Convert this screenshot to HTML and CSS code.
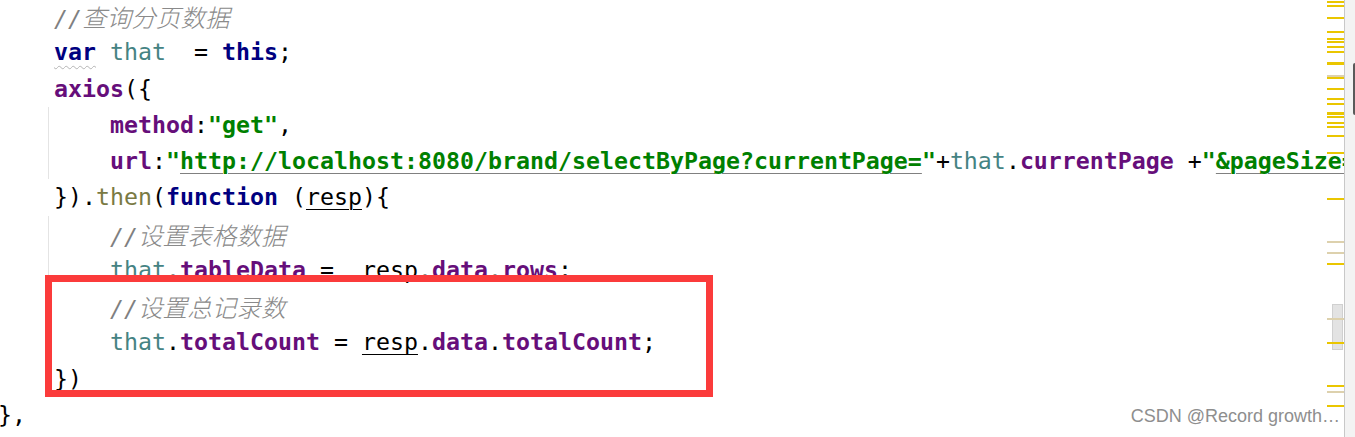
FILE: index.html
```html
<!DOCTYPE html>
<html lang="zh-CN">
<head>
    <meta charset="UTF-8">
    <title>axios 分页查询</title>
    <link rel="stylesheet" href="styles.css">
</head>
<body>
    <div class="window">
        <div class="editor">
            <div class="code">
                <div class="line">    <span class="cm">//<span class="zh">查询分页数据</span></span></div>
                <div class="line">    <span class="kw warn">var</span> <span class="var">that</span>  = <span class="kw">this</span>;</div>
                <div class="line">    <span class="fld">axios</span>({</div>
                <div class="line"><span class="guide"></span>        <span class="fld">method</span>:<span class="str">"get"</span>,</div>
                <div class="line"><span class="guide"></span>        <span class="fld">url</span>:<span class="str">"<span class="link">http://localhost:8080/brand/selectByPage?currentPage=</span>"</span>+<span class="var">that</span>.<span class="fld">currentPage</span> +<span class="str">"<span class="link">&amp;pageSize=</span>"</span>+<span class="var">that</span>.<span class="fld">pageSize</span>,</div>
                <div class="line">    }).<span class="fn">then</span>(<span class="kw">function</span> (<span class="param">resp</span>){</div>
                <div class="line"><span class="guide"></span>        <span class="cm">//<span class="zh">设置表格数据</span></span></div>
                <div class="line"><span class="guide"></span>        <span class="var">that</span>.<span class="fld">tableData</span> =  <span class="plain">resp</span>.<span class="fld">data</span>.<span class="fld">rows</span>;</div>
                <div class="line"><span class="guide"></span>        <span class="cm">//<span class="zh">设置总记录数</span></span></div>
                <div class="line"><span class="guide"></span>        <span class="var">that</span>.<span class="fld">totalCount</span> = <span class="param">resp</span>.<span class="fld">data</span>.<span class="fld">totalCount</span>;</div>
                <div class="line">    })</div>
                <div class="line">},</div>
            </div>

            <div class="highlight"></div>

            <div class="stripe">
                <div class="thumb"></div>
                <i class="mark" style="top:1px"></i>
                <i class="mark" style="top:5px"></i>
                <i class="mark" style="top:17px"></i>
                <i class="mark" style="top:31px"></i>
                <i class="mark" style="top:38px"></i>
                <i class="mark" style="top:41px"></i>
                <i class="mark" style="top:46px"></i>
                <i class="mark" style="top:51px"></i>
                <i class="mark wide" style="top:62px"></i>
                <i class="mark soft" style="top:75px"></i>
                <i class="mark" style="top:77px"></i>
                <i class="mark" style="top:88px"></i>
                <i class="mark" style="top:98px"></i>
                <i class="mark" style="top:103px"></i>
                <i class="mark wide" style="top:112px"></i>
                <i class="mark" style="top:116px"></i>
                <i class="mark" style="top:122px"></i>
                <i class="mark" style="top:126px"></i>
                <i class="mark" style="top:135px"></i>
                <i class="mark" style="top:152px"></i>
                <i class="mark" style="top:198px"></i>
                <i class="mark soft" style="top:241px"></i>
                <i class="mark soft" style="top:252px"></i>
                <i class="mark" style="top:263px"></i>
                <i class="mark soft" style="top:318px"></i>
                <i class="mark" style="top:342px"></i>
                <i class="mark" style="top:385px"></i>
                <i class="mark soft" style="top:391px"></i>
                <i class="mark" style="top:405px"></i>
            </div>
        </div>
        <div class="side">
            <div class="side-thumb"></div>
        </div>

        <div class="watermark">CSDN @Record growth…</div>
    </div>
</body>
</html>
```

FILE: styles.css
```css
body {
    margin: 0;
    background: #fff;
    overflow: hidden;
}
.window {
    position: relative;
    display: flex;
    height: 437px;
    overflow: hidden;
}
.editor {
    position: relative;
    flex: 1;
    overflow: hidden;
}
.code {
    margin: -2px 0 0 -2px;
    font-family: "DejaVu Sans Mono", monospace;
    font-size: 23.26px;
    color: #000;
}
.line {
    position: relative;
    height: 36.27px;
    line-height: 36.27px;
    white-space: pre;
}
.guide {
    position: absolute;
    left: 50px;
    top: 0;
    bottom: 0;
    border-left: 1px solid #e4e4e4;
}

.kw { color: #000080; font-weight: bold; }
.var { color: #458383; }
.fld { color: #660e7a; font-weight: bold; }
.str { color: #008000; font-weight: bold; }
.fn { color: #7a7a43; }
.cm { color: #808080; font-style: italic; }
.cm .zh {
    font-family: "Noto Sans CJK SC", sans-serif;
    font-size: 24.6px;
    font-weight: 300;
    color: #8a8a8a;
}
.warn {
    text-decoration: underline wavy #b4b4b4;
    text-decoration-thickness: 1px;
    text-underline-offset: 5px;
}
.link {
    text-decoration: underline solid #808080;
    text-decoration-thickness: 1px;
    text-underline-offset: 4px;
}
.param {
    text-decoration: underline solid #000;
    text-decoration-thickness: 1px;
    text-underline-offset: 4px;
}

.highlight {
    position: absolute;
    left: 45px;
    top: 275px;
    width: 668px;
    height: 122px;
    box-sizing: border-box;
    border: 7px solid #fb3b3b;
}

.stripe {
    position: absolute;
    top: 0;
    right: 0;
    width: 17px;
    height: 100%;
}
.thumb {
    position: absolute;
    left: 5px;
    top: 304px;
    width: 11px;
    height: 46px;
    box-sizing: border-box;
    background: #e3e3e3;
    border: 1px solid #d0d0d0;
}
.mark {
    position: absolute;
    left: 0;
    width: 17px;
    height: 2px;
    background: #eac600;
}
.mark.wide { height: 3px; }
.mark.soft { background: #ddd1ad; }

.side {
    width: 10px;
    border-left: 1px solid #c8c8c8;
    background: #f3f3f3;
    display: flex;
    flex-direction: column;
    align-items: flex-end;
}
.side-thumb {
    margin-top: 63px;
    width: 2px;
    height: 52px;
    border-radius: 2px 0 0 2px;
    background: #5a5a5a;
}

.watermark {
    position: absolute;
    right: 15px;
    top: 404px;
    font-family: "Liberation Sans", Arial, sans-serif;
    font-size: 18px;
    line-height: 24px;
    color: #8e8e8e;
}
```
